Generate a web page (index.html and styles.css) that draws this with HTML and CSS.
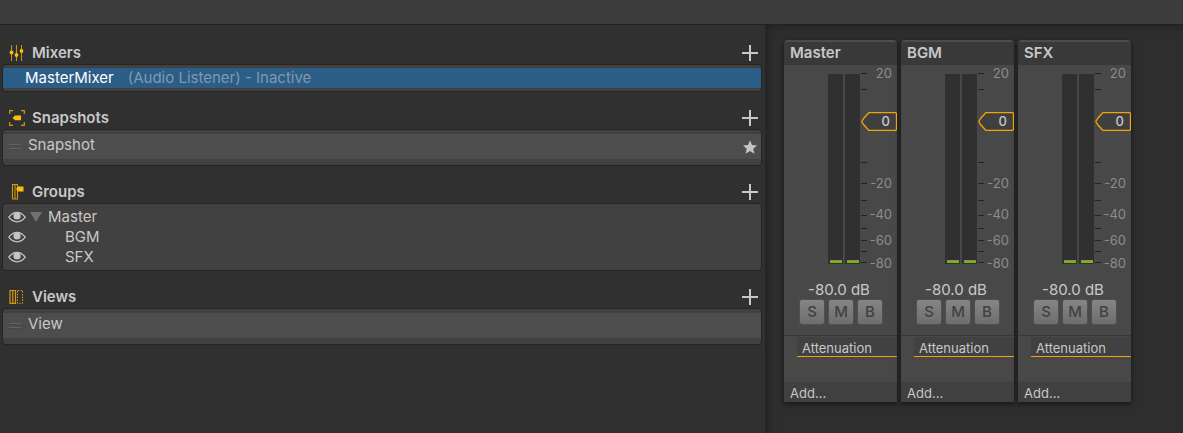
FILE: index.html
```html
<!DOCTYPE html>
<html lang="en">
<head>
<meta charset="utf-8">
<title>Audio Mixer</title>
<link rel="stylesheet" href="styles.css">
</head>
<body>
<svg class="defs" aria-hidden="true">
  <symbol id="plus" viewBox="0 0 16 16"><path d="M8 0v16M0 8h16" stroke="#c8c8c8" stroke-width="2"/></symbol>
  <symbol id="eye" viewBox="0 0 18 12"><path d="M.8 6.200Q4.400 1.300 9 1.300T17.200 6.200Q13.600 10.800 9 10.800T.8 6.200Z" fill="none" stroke="#c4c4c4" stroke-width="1.300"/><circle cx="9" cy="5" r="3.600" fill="#c4c4c4"/></symbol>
  <symbol id="grip" viewBox="0 0 12 6"><path d="M0 .5h12M0 4.500h12" stroke="#626262"/><path d="M0 1.500h12M0 5.500h12" stroke="#3f3f3f" opacity=".4"/></symbol>
  <symbol id="handle" viewBox="0 0 36 19"><path d="M.8 9.500 3 6l5-5.500h26.500l1 1v16l-1 1H8L3 13Z" fill="#3f3f3f" stroke="#f0a30a" stroke-width="1.300"/></symbol>
  <symbol id="ticks" viewBox="0 0 6 190"><path d="M0 .5h6M0 16.500h6M0 89.500h6M0 110.500h6M0 127.500h6M0 142.500h6M0 155.500h6M0 167.500h6M0 178.500h6M0 189.500h6" stroke="#232323"/></symbol>
</svg>
<header class="toolbar"></header>
<main class="mixer">
  <aside class="sidebar">
    <section class="section">
      <div class="head">
        <svg class="icon" viewBox="0 0 16 16"><path d="M2.500 0v16M7.500 0v16M12.500 0v16" stroke="#c8950c"/><g fill="#fdbd08"><circle cx="2.500" cy="7.500" r="1.900"/><circle cx="7.500" cy="10" r="1.900"/><circle cx="12.500" cy="6" r="1.900"/></g></svg>
        <h2>Mixers</h2>
        <button class="add" aria-label="Add mixer"><svg><use href="#plus"/></svg></button>
      </div>
      <div class="list">
        <div class="row selected"><span>MasterMixer</span><span class="muted">(Audio Listener) - Inactive</span></div>
      </div>
    </section>
    <section class="section">
      <div class="head">
        <svg class="icon" viewBox="0 0 16 16"><path d="M.7 4V.7H4M12 .7h3.300V4M15.300 12v3.300H12M4 15.300H.7V12" fill="none" stroke="#d09a10" stroke-width="1.200"/><path d="M3.500 8 6 5.500h6v4.800H6Z" fill="#fdbd08"/></svg>
        <h2>Snapshots</h2>
        <button class="add" aria-label="Add snapshot"><svg><use href="#plus"/></svg></button>
      </div>
      <div class="list sortable">
        <div class="row item"><svg class="grip"><use href="#grip"/></svg><span>Snapshot</span><svg class="star" viewBox="0 0 14 14"><path d="M7 .3 9 4.900l5 .5-3.700 3.300 1.100 5L7 11.100l-4.400 2.600 1.100-5L0 5.400l5-.5Z" fill="#c4c4c4"/></svg></div>
      </div>
    </section>
    <section class="section">
      <div class="head">
        <svg class="icon" viewBox="0 0 16 16"><path d="M3.500.5h5v14.500h-5ZM6 .5v14.500" fill="none" stroke="#d09a10" stroke-width="1.100"/><path d="M7 5 9 2.500h5.500v5H9Z" fill="#fdbd08"/></svg>
        <h2>Groups</h2>
        <button class="add" aria-label="Add group"><svg><use href="#plus"/></svg></button>
      </div>
      <div class="list">
        <div class="row group"><svg class="eye"><use href="#eye"/></svg><svg class="fold" viewBox="0 0 12 10"><path d="M0 0h12L6 10Z" fill="#707070"/></svg><span>Master</span></div>
        <div class="row group child"><svg class="eye"><use href="#eye"/></svg><span>BGM</span></div>
        <div class="row group child"><svg class="eye"><use href="#eye"/></svg><span>SFX</span></div>
      </div>
    </section>
    <section class="section">
      <div class="head">
        <svg class="icon" viewBox="0 0 16 16"><path d="M1 1.500h5.500v12.800H1ZM3.800 1.500v12.800" fill="none" stroke="#d09a10" stroke-width="1.200"/><path d="M8.500 1.500h5v12.800h-5Z" fill="none" stroke="#d09a10" stroke-width="1.100" stroke-dasharray="1.500 1.300"/></svg>
        <h2>Views</h2>
        <button class="add" aria-label="Add view"><svg><use href="#plus"/></svg></button>
      </div>
      <div class="list sortable">
        <div class="row item"><svg class="grip"><use href="#grip"/></svg><span>View</span></div>
      </div>
    </section>
  </aside>
  <div class="strips">
    <article class="strip">
      <h3>Master</h3>
      <div class="levels">
        <div class="meter"></div><div class="meter"></div>
        <div class="scale">
          <svg class="ticks"><use href="#ticks"/></svg>
          <span class="mark db20">20</span><span class="mark dbm20">-20</span><span class="mark dbm40">-40</span><span class="mark dbm60">-60</span><span class="mark dbm80">-80</span>
          <input class="fader" type="range" min="-80" max="20" value="0" aria-label="Master volume">
          <div class="knob"><svg><use href="#handle"/></svg><span>0</span></div>
        </div>
      </div>
      <p class="db">-80.0 dB</p>
      <div class="toggles"><button>S</button><button>M</button><button>B</button></div>
      <div class="effects"><button class="effect">Attenuation</button></div>
      <button class="more">Add...</button>
    </article>
    <article class="strip">
      <h3>BGM</h3>
      <div class="levels">
        <div class="meter"></div><div class="meter"></div>
        <div class="scale">
          <svg class="ticks"><use href="#ticks"/></svg>
          <span class="mark db20">20</span><span class="mark dbm20">-20</span><span class="mark dbm40">-40</span><span class="mark dbm60">-60</span><span class="mark dbm80">-80</span>
          <input class="fader" type="range" min="-80" max="20" value="0" aria-label="BGM volume">
          <div class="knob"><svg><use href="#handle"/></svg><span>0</span></div>
        </div>
      </div>
      <p class="db">-80.0 dB</p>
      <div class="toggles"><button>S</button><button>M</button><button>B</button></div>
      <div class="effects"><button class="effect">Attenuation</button></div>
      <button class="more">Add...</button>
    </article>
    <article class="strip">
      <h3>SFX</h3>
      <div class="levels">
        <div class="meter"></div><div class="meter"></div>
        <div class="scale">
          <svg class="ticks"><use href="#ticks"/></svg>
          <span class="mark db20">20</span><span class="mark dbm20">-20</span><span class="mark dbm40">-40</span><span class="mark dbm60">-60</span><span class="mark dbm80">-80</span>
          <input class="fader" type="range" min="-80" max="20" value="0" aria-label="SFX volume">
          <div class="knob"><svg><use href="#handle"/></svg><span>0</span></div>
        </div>
      </div>
      <p class="db">-80.0 dB</p>
      <div class="toggles"><button>S</button><button>M</button><button>B</button></div>
      <div class="effects"><button class="effect">Attenuation</button></div>
      <button class="more">Add...</button>
    </article>
  </div>
</main>
</body>
</html>
```

FILE: styles.css
```css
* { box-sizing: border-box; }
body {
  margin: 0;
  min-height: 100vh;
  display: flex;
  flex-direction: column;
  background: #303030;
  color: #c8c8c8;
  font: 15px/20px Inter, sans-serif;
}
h2, h3, p { margin: 0; }
svg { display: block; flex: none; }
.defs { position: absolute; width: 0; height: 0; }
button {
  padding: 0;
  border: 0;
  background: none;
  color: inherit;
  font: inherit;
}
.toolbar {
  height: 25px;
  background: #3c3c3c;
  border-bottom: 1px solid #212121;
}
.mixer { flex: 1; display: flex; }

.sidebar {
  flex: 0 1 766px;
  padding: 2px 3px 0 2px;
  border-right: 1px solid #262626;
}
.head {
  display: flex;
  align-items: center;
  height: 37px;
  padding: 14px 4px 0 7px;
}
.head h2 {
  flex: 1;
  margin-left: 7px;
  font-size: 15px;
  font-weight: 600;
}
.icon { width: 16px; height: 16px; }
.add svg { width: 16px; height: 16px; }
.list {
  padding: 3px 0;
  background: #414141;
  border: 1px solid #242424;
  border-radius: 4px;
}
.row { display: flex; align-items: center; height: 20px; }
.selected {
  gap: 14px;
  padding-left: 22px;
  background: #2c5d87;
  color: #fff;
}
.muted { color: #8099af; }
.sortable { padding: 4px 0 6px; }
.item {
  height: 25px;
  padding: 0 4px 0 6px;
  background: #4d4d4d;
}
.item span { flex: 1; margin-left: 7px; padding-bottom: 3px; }
.grip { width: 12px; height: 6px; }
.star { width: 14px; height: 14px; }
.group { padding-left: 5px; }
.eye { width: 18px; height: 12px; }
.fold { width: 12px; height: 10px; margin: 0 6px 0 4px; }
.child span { margin-left: 39px; }

.strips {
  flex: 1;
  display: flex;
  align-items: flex-start;
  gap: 4px;
  padding: 15px 18px;
  background: #2e2e2e;
  box-shadow: inset 6px 6px 8px -4px #222;
}
.strip {
  flex: 0 0 113px;
  display: flex;
  flex-direction: column;
  background: #484848;
  border-top: 2px solid #4d4d4d;
  border-radius: 4px 4px 2px 2px;
  box-shadow: 0 2px 4px 1px #1c1c1c;
}
.strip h3 {
  height: 23px;
  padding-left: 6px;
  background: #393939;
  font-size: 15px;
  line-height: 22px;
  font-weight: 600;
}
.levels {
  display: flex;
  gap: 2px;
  padding: 9px 0 0 44px;
}
.meter {
  width: 15px;
  height: 190px;
  padding: 0 1px 1px 2px;
  background: linear-gradient(#7ab800, #7ab800) content-box bottom / 100% 2px no-repeat, linear-gradient(#888, #888) content-box bottom / 100% 3px no-repeat, #303030;
}
.scale { position: relative; flex: 1; height: 190px; }
.ticks { width: 6px; height: 190px; margin: -1px 0 0 -1px; }
.mark {
  position: absolute;
  right: 5px;
  margin-top: -1px;
  color: #8c8c8c;
  font-size: 13px;
  line-height: 16px;
  transform: translateY(-50%);
}
.db20 { top: 0; }
.dbm20 { top: 58%; }
.dbm40 { top: 74%; }
.dbm60 { top: 88%; }
.dbm80 { top: 100%; }
.fader {
  position: absolute;
  inset: 0;
  width: 100%;
  height: 100%;
  margin: 0;
  opacity: 0;
  writing-mode: vertical-lr;
  direction: rtl;
}
.knob {
  position: absolute;
  top: 20%;
  right: 0;
  pointer-events: none;
}
.knob svg { width: 36px; height: 19px; }
.knob span {
  position: absolute;
  inset: 0 7px 0 0;
  text-align: right;
  font-size: 13px;
  line-height: 19px;
  font-weight: 500;
}
.db {
  margin-top: 16px;
  padding-right: 3px;
  text-align: center;
}
.toggles {
  display: flex;
  gap: 5px;
  padding-left: 16px;
}
.toggles button {
  width: 24px;
  height: 24px;
  border-radius: 2px;
  background: linear-gradient(#858585, #6e6e6e);
  box-shadow: 0 0 0 1px #505050;
  color: #414141;
  font-size: 15px;
  font-weight: 500;
}
.effects {
  height: 47px;
  margin-top: 11px;
  padding: 1px 0 0 13px;
  border-top: 1px solid #383838;
}
.effect {
  display: block;
  width: 100%;
  height: 20px;
  padding: 1px 0 0 5px;
  background: #414141;
  border-bottom: 1px solid #f0a30a;
  font-size: 13px;
  line-height: 20px;
  text-align: left;
}
.more {
  height: 20px;
  padding: 1px 0 0 6px;
  background: #404040;
  font-size: 13px;
  line-height: 20px;
  text-align: left;
}
```
